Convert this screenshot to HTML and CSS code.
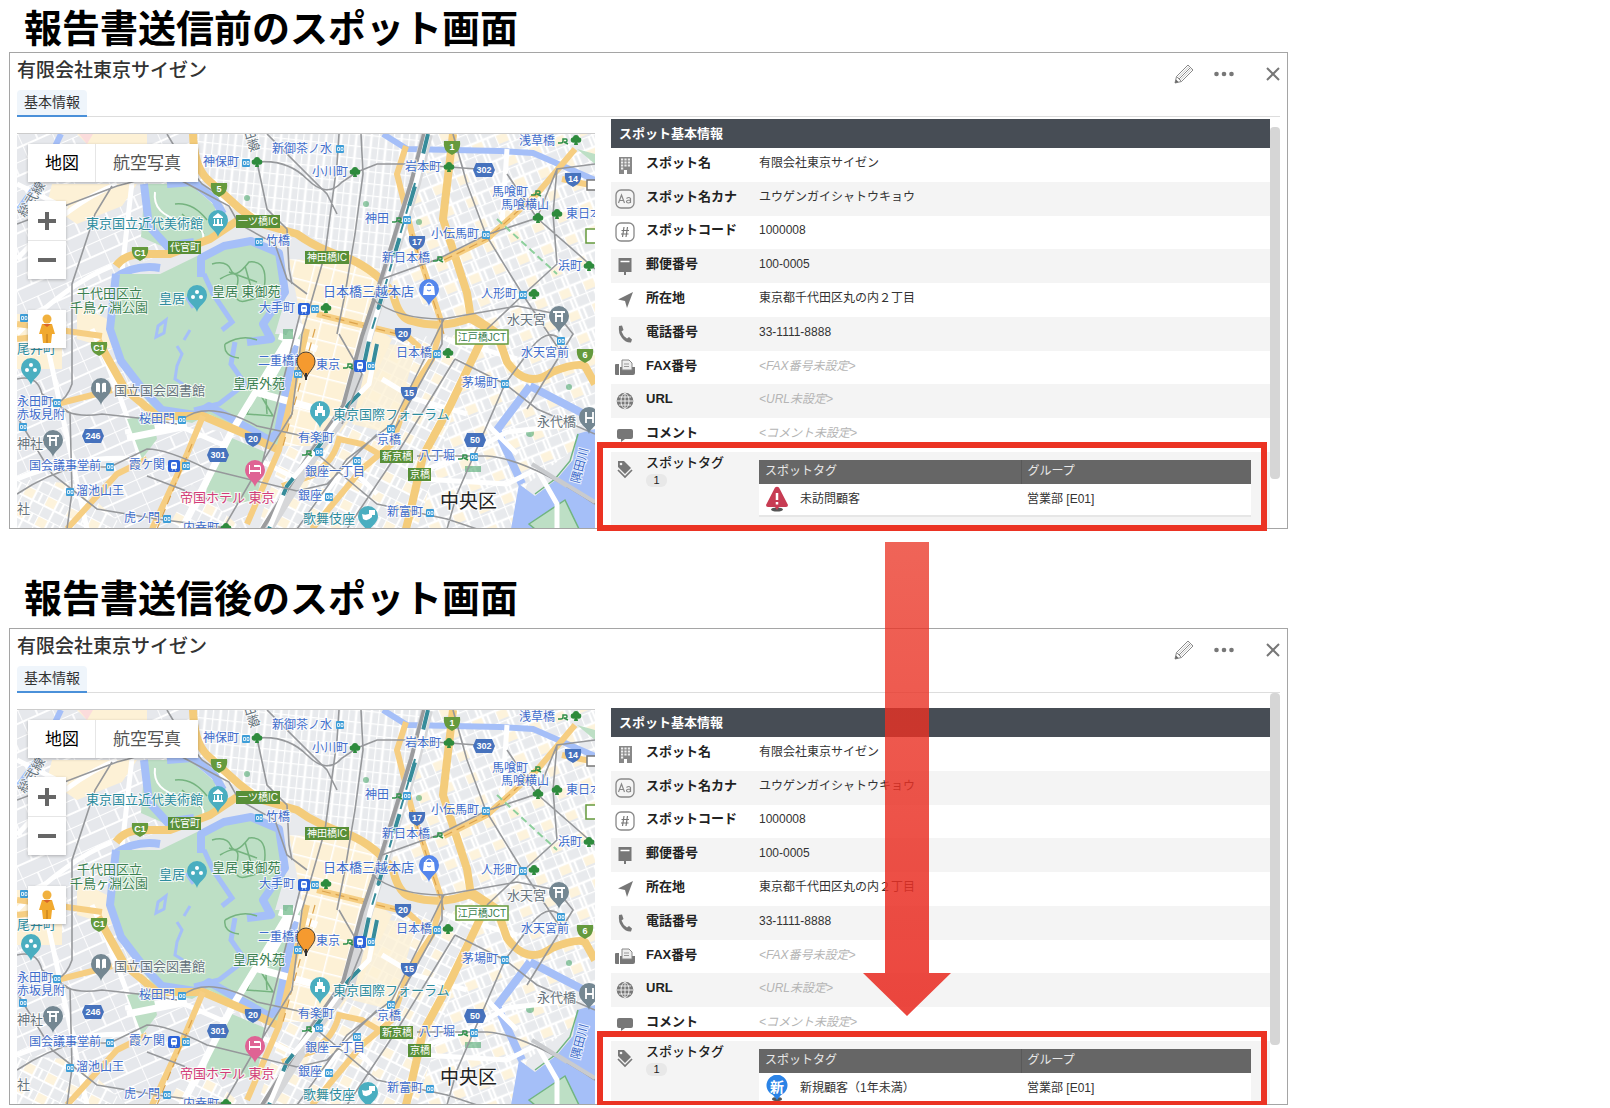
FILE: index.html
```
<!DOCTYPE html>
<html lang="ja">
<head>
<meta charset="utf-8">
<title>スポット画面</title>
<link rel="stylesheet" href="styles.css">
</head>
<body>
<svg class="sprite" aria-hidden="true">
  <defs>
    <pattern id="st-kanda" width="15" height="12" patternUnits="userSpaceOnUse" patternTransform="rotate(6)"><rect width="15" height="12" fill="#e8eaed"/><path d="M0 0H15M0 0V12M8 0V12" stroke="#fff" stroke-width="2.6"/></pattern>
    <pattern id="st-east" width="26" height="24" patternUnits="userSpaceOnUse" patternTransform="rotate(-22)"><rect width="26" height="24" fill="#e8eaed"/><rect x="1" y="13" width="11" height="9" fill="#fdf3dc"/><path d="M0 0H26M0 12H26M0 0V24M9 0V12M18 12V24M13 0V24" stroke="#fff" stroke-width="2.4"/></pattern>
    <pattern id="st-ginza" width="24" height="22" patternUnits="userSpaceOnUse" patternTransform="rotate(27)"><rect width="24" height="22" fill="#e8eaed"/><rect x="1" y="1" width="11" height="9" fill="#fdf3dc"/><path d="M0 0H24M0 11H24M0 0V22M12 0V22M18 0V11" stroke="#fff" stroke-width="2.2"/></pattern>
    <pattern id="st-maru" width="20" height="18" patternUnits="userSpaceOnUse" patternTransform="rotate(14)"><rect width="20" height="18" fill="#fdf1d6"/><path d="M0 0H20M0 0V18" stroke="#fff" stroke-width="3"/></pattern>
    <pattern id="st-west" width="32" height="26" patternUnits="userSpaceOnUse" patternTransform="rotate(-24)"><rect width="32" height="26" fill="#e6e8ec"/><path d="M0 0H32M0 0V26M17 0V13M0 13H32" stroke="#fff" stroke-width="1.8"/></pattern>

    <g id="metro"><rect x="-4" y="-4" width="8" height="8" rx="1" fill="#3e9ed8"/><path d="M-2.500 -1.500H-.5V1.500H-2.500ZM1 -1.500H3V1.500H1Z" fill="none" stroke="#fff" stroke-width=".8"/></g>
    <g id="jr" fill="none" stroke="#2f8f4a" stroke-width="1.5"><path d="M-5 2H-2Q0 2 0 0V-2H3Q4 -2 4 -.5T3 1H1L5 3"/></g>
    <g id="clover" fill="#2e8b3d"><circle cx="-2.500" cy="0" r="2.800"/><circle cx="2.500" cy="0" r="2.800"/><circle cy="-2" r="3"/><path d="M-1 0H1L2 5H-2Z"/></g>
    <g id="train"><rect x="-6" y="-6" width="12" height="12" rx="2" fill="#2b62d9"/><rect x="-3" y="-4" width="6" height="7" rx="1.500" fill="#fff"/><path d="M-2 -2H2V0H-2ZM-2 5L-1 3M2 5L1 3" fill="#2b62d9" stroke="#fff" stroke-width=".6"/></g>
    <path id="pin" d="M0 17C-1 11 -10 8 -10 0A10 10 0 0 1 10 0C10 8 1 11 0 17Z"/>
    <path id="shield" d="M-8 -6H8Q9 1 5 5L0 8L-5 5Q-9 1 -8 -6Z"/>
    <path id="badge" d="M-8 -7H8L11 0L8 7H-8L-11 0Z"/>

    <symbol id="map-base" viewBox="0 0 578 395">
      <rect width="578" height="395" fill="#e8eaed"/>
      <path d="M0 0H230L200 100L120 130L90 200L140 282L260 312L230 395H0Z" fill="url(#st-west)"/>
      <path d="M35 50L120 50L105 72L60 90L30 70ZM0 180H45V235H0ZM60 170L90 185L95 215L60 205ZM60 0H130V10H70Z" fill="#fdf1d6"/>
      <path d="M0 345L60 350L110 395H0ZM150 395L175 350L225 395Z" fill="url(#st-ginza)"/>
      <path d="M180 0H420L370 140L340 130L290 100L235 85L185 45Z" fill="url(#st-kanda)"/>
      <path d="M408 0H578V300L510 350L500 395H390L450 200L375 150Z" fill="url(#st-east)"/>
      <path d="M352 205L460 200L400 395H240L265 320Z" fill="url(#st-ginza)"/>
      <path d="M272 125L330 128L365 145L335 270L300 312L262 312L285 190Z" fill="url(#st-maru)"/>
      <path d="M355 190L375 205L345 270L322 300L340 240Z" fill="#fdf1d6"/>
      <path d="M368 210L400 212L375 300L335 290Z" fill="#fdf1d6" opacity=".8"/>
      <path d="M62 0H76L70 10Z" fill="#fbdcdc"/>
      <path d="M0 125Q50 70 100 50M0 200Q50 150 95 132M30 210L70 395M75 195Q105 260 125 330M0 50L50 75M115 48L98 200M108 298L158 290L250 330L280 345M168 50L245 85M0 345Q60 320 125 325" fill="none" stroke="#fff" stroke-width="5"/>

      <path d="M128 50H173L198 72L200 100L158 118L124 103Z" fill="#bddfc5"/>
      <path d="M127 50L132 92L150 112L177 108M150 50L176 48L198 66L206 80M98 144Q118 130 143 134" fill="none" stroke="#a5bff8" stroke-width="8"/>
      <path d="M98 140L143 140L180 122L210 110L234 105L263 115L270 159L258 200L284 200L272 250L262 312L225 296L192 280L175 289L143 282L126 262L103 229L90 195Z" fill="#bddfc5"/>
      <path d="M99 140L93 195L104 227L127 257L145 276L178 281L192 272L252 306L261 298L279 205M184 143V124L207 112L234 107L262 119L268 158L246 190L254 205L230 208" fill="none" stroke="#a5bff8" stroke-width="8" stroke-linejoin="round"/>
      <path d="M187 140L196 160L215 188L205 196M218 208L214 230L228 250L202 270L177 276" fill="none" stroke="#a5bff8" stroke-width="5"/>
      <path d="M141 192L149 186L147 199L139 203ZM160 212L165 220L160 232L158 245L166 250M173 196L167 206M169 163L176 174" fill="none" stroke="#a5bff8" stroke-width="3"/>
      <path d="M195 130Q210 126 214 136T232 128Q248 126 248 145T232 166Q215 172 220 152T203 145M212 138L240 148M228 132L236 160M208 210Q225 200 240 206M208 210Q206 222 222 224M240 255L256 282L230 280ZM248 250L250 280M158 70Q176 68 190 86M165 80L187 100" fill="none" stroke="#75b37f" stroke-width="1.500"/>
      <path d="M138 58Q135 80 165 87T183 112" fill="none" stroke="#fff" stroke-width="2"/>
      <path d="M210 302L248 318L240 365L220 370L188 360ZM110 285L135 280L140 305L125 325ZM560 15L578 20V30Z" fill="#bddfc5"/>
      <path d="M275 198L215 297L165 395M285 190L245 260L300 275M262 202L300 215M170 292L110 304" fill="none" stroke="#fff" stroke-width="7"/>
      <g fill="#2f9a55" opacity=".5"><circle cx="230" cy="64" r="3"/><circle cx="402" cy="88" r="3"/><circle cx="513" cy="299" r="4"/><circle cx="552" cy="253" r="3"/><circle cx="349" cy="70" r="3"/><rect x="448" y="332" width="16" height="6"/><rect x="266" y="195" width="10" height="10"/></g>

      <path d="M366 0L390 15L483 17L516 19L578 46M0 78L20 50L44 0" fill="none" stroke="#a5bff8" stroke-width="6"/>
      <path d="M513 252L480 296L505 350M513 252L565 279" fill="none" stroke="#a5bff8" stroke-width="8"/>
      <path d="M560 300L578 295V395H494L502 350L518 362L540 345L556 326Z" fill="#a5bff8"/>
      <path d="M512 390L548 366L562 395H518Z" fill="#bddfc5" stroke="#71b580" stroke-width="1.500"/>
      <path d="M561 300L553 327L538 345L518 360" fill="none" stroke="#71b580" stroke-width="1.500"/>
      <path d="M405 345L490 350L520 335L540 370L540 395M410 335L450 320L490 298L560 290M365 245L398 265L450 280M470 290L500 320M300 370L330 330L360 360M430 205L500 225M490 15L485 90" fill="none" stroke="#fff" stroke-width="5"/>

      <g fill="none" stroke="#f4cc7b" stroke-width="8" stroke-linejoin="round">
        <path d="M99 132Q108 120 125 120L153 120L193 105L220 87L245 90L280 100Q300 115 333 125Q360 137 376 160Q382 185 395 187Q425 196 456 183L480 199L490 228Q510 256 535 238Q560 228 568 232L578 250"/>
        <path d="M176 0Q177 32 190 45L222 74L243 90"/>
        <path d="M436 0L426 85L450 159L454 185L480 200M463 209L433 272L406 322L393 379L389 395"/>
        <path d="M81 207L108 255L140 282L186 282L226 299L262 316"/>
      </g>
      <g fill="none" stroke="#f6ce82" stroke-width="6">
        <path d="M186 282L170 320L135 395M0 190L85 202M0 205L40 200M40 270L95 256M50 395L100 340L130 325M290 195L262 316L230 390M389 12L380 40L395 100L410 145L425 190L415 225L392 260L375 310L345 335L295 395M300 180L390 202L410 220M427 126L470 105L520 60L558 15M283 345Q315 335 322 305L345 310L362 320M545 45L578 52M265 352L300 340"/>
      </g>
      <path d="M305 181L388 202M395 100L427 200M427 126L470 105L520 60M175 310L140 395M298 195L266 312" fill="none" stroke="#dca34c" stroke-width="1.200" stroke-dasharray="9 5"/>

      <path d="M410 0L398 49L370 139L350 202L333 272L300 315L250 395" fill="none" stroke="#d6d7d9" stroke-width="12"/>
      <path d="M407 0L394 49L366 139L345 202L326 272L296 315L245 395" fill="none" stroke="#9b9c9e" stroke-width="4"/>
      <path d="M411 0L399 49L372 139L353 202L345 240M360 210L352 250L332 270L302 312L270 352L252 395" fill="none" stroke="#fff" stroke-width="5"/>
      <path d="M411 0L399 49L372 139L353 202L345 240M360 210L352 250L332 270L302 312L270 352L252 395" fill="none" stroke="#378c9a" stroke-width="4" stroke-dasharray="20 34"/>
      <path d="M398 49L372 139L353 202" fill="none" stroke="#378c9a" stroke-width="2" stroke-dasharray="12 8"/>
      <g fill="none" stroke="#96989b" stroke-width="1.600">
        <path d="M0 90L100 52L138 42M95 52L78 80L55 150V190L55 250Q50 265 40 269M150 0L165 25L185 50L200 60M165 47L212 72L222 90L258 110L270 145L290 160M240 28L250 75L270 95L272 135L275 150M240 28Q270 25 290 45T325 48L340 38L360 30H388L432 33L460 35"/>
        <path d="M322 0L320 30L308 120L285 200L275 280L235 345L206 395M344 0L346 40L338 100L328 160L320 200M0 245Q20 240 25 260L53 279L55 358L50 395M40 269Q50 285 85 280L130 285L160 290M165 286Q190 265 240 292L300 305M0 360Q30 340 60 333H93L130 315Q150 315 190 335L280 357L310 350L360 300M0 283L35 340L80 375L140 385L210 394M130 342L190 365M436 0L450 50L469 101L506 161L545 220M421 125L469 101L520 84L540 35L578 30M540 35L536 80L540 130L506 161L470 195M365 145L421 125M355 165Q380 185 426 185L500 172L540 180L556 200L510 275M427 185L400 240L375 290L330 325L280 395M438 225L380 320L330 395M438 225L488 250L520 275L578 300M400 322H470Q510 325 578 370M425 185V210L375 300M545 207Q530 190 510 220L488 250L440 360L430 395M250 0L310 60L320 80M283 180L245 330M300 320L360 370L430 385L460 395M322 200L345 240L325 290M490 40L520 84L578 135"/>
      </g>
      <path d="M480 85L540 140" stroke="#8dcf9c" stroke-width="2" stroke-dasharray="7 4"/>
      <path d="M540 345L578 368M515 330L550 352" stroke="#c9cbce" stroke-width="4"/>

      <g fill="#659a3d"><use href="#shield" x="202" y="55"/><use href="#shield" x="123" y="119"/><use href="#shield" x="82" y="214"/><use href="#shield" x="435" y="13"/><use href="#shield" x="568" y="221"/></g>
      <g fill="#4672bd"><use href="#shield" x="400" y="108"/><use href="#shield" x="556" y="45"/><use href="#shield" x="386" y="200"/><use href="#shield" x="392" y="259"/><use href="#shield" x="236" y="305"/><use href="#badge" x="467" y="36"/><use href="#badge" x="76" y="302"/><use href="#badge" x="201" y="321"/><use href="#badge" x="458" y="306"/></g>
      <g fill="#588f38"><rect x="219" y="81" width="44" height="13"/><rect x="151" y="107" width="33" height="13"/><rect x="288" y="117" width="44" height="13"/><rect x="363" y="316" width="33" height="13"/><rect x="391" y="334" width="23" height="13"/></g>
      <g fill="#fff" stroke="#659a3d" stroke-width="1.500"><rect x="439" y="196" width="52" height="14"/><rect x="569" y="95" width="14" height="14"/><rect x="570" y="46" width="12" height="10" stroke="#777"/></g>

      <g fill="#4aaec0"><use href="#pin" x="201" y="86"/><use href="#pin" x="180" y="161"/><use href="#pin" x="14" y="234"/><use href="#pin" x="303" y="277"/><use href="#pin" x="351" y="382"/></g>
      <g fill="#748792"><use href="#pin" x="542" y="182"/><use href="#pin" x="572" y="283"/><use href="#pin" x="84" y="254"/><use href="#pin" x="36" y="306"/></g>
      <use href="#pin" x="412" y="155" fill="#5486ec"/><use href="#pin" x="238" y="336" fill="#df6394"/>
      <g fill="#fff">
        <path d="M196 83L201 79L206 83V84H196ZM197 85H198V90H197ZM200 85H202V90H200ZM204 85H205V90H204ZM196 90H206V92H196Z"/>
        <circle cx="180" cy="158" r="2"/><circle cx="176" cy="163" r="2"/><circle cx="184" cy="163" r="2"/><circle cx="14" cy="231" r="2"/><circle cx="10" cy="236" r="2"/><circle cx="18" cy="236" r="2"/>
        <path d="M298 276H308V282H305V279H301V282H298ZM300 272H306V276H300ZM302 269H303V272H302Z"/>
        <path d="M79 249Q82 248 83 250V259Q82 257 79 258ZM89 249Q86 248 85 250V259Q86 257 89 258Z"/>
        <path d="M232 331H233V336H243V333H237V331H242Q244 331 244 334V340H243V338H233V340H232Z"/>
        <path d="M407 152H417L418 161H406Z"/><path d="M345 380Q350 382 355 378V383Q350 388 346 385ZM352 376H358V381H352Z"/>
      </g>
      <path d="M409 154V151Q412 147 415 151V154" fill="none" stroke="#fff" stroke-width="1.200"/><path d="M410 156Q412 158 414 156" fill="none" stroke="#5486ec"/>
      <path d="M536 178H548M538 182H546M539 178V188M545 178V188M30 302H42M32 306H40M33 302V312M39 302V312M569 278V289M576 278V289M569 284H576" fill="none" stroke="#fff" stroke-width="1.800"/>

      <use href="#metro" x="323" y="15"/><use href="#metro" x="229" y="29"/><use href="#metro" x="242" y="108"/><use href="#metro" x="298" y="175"/><use href="#metro" x="390" y="86"/><use href="#metro" x="469" y="101"/><use href="#metro" x="506" y="161"/><use href="#metro" x="420" y="220"/><use href="#metro" x="544" y="207"/><use href="#metro" x="354" y="232"/><use href="#metro" x="488" y="250"/><use href="#metro" x="374" y="295"/><use href="#metro" x="457" y="323"/><use href="#metro" x="302" y="318"/><use href="#metro" x="340" y="327"/><use href="#metro" x="312" y="363"/><use href="#metro" x="413" y="379"/><use href="#metro" x="40" y="269"/><use href="#metro" x="6" y="293"/><use href="#metro" x="165" y="286"/><use href="#metro" x="93" y="333"/><use href="#metro" x="169" y="332"/><use href="#metro" x="53" y="358"/><use href="#metro" x="150" y="385"/><use href="#metro" x="281" y="240"/><use href="#metro" x="7" y="184"/>
      <use href="#clover" x="240" y="28"/><use href="#clover" x="309" y="174"/><use href="#clover" x="338" y="38"/><use href="#clover" x="432" y="33"/><use href="#clover" x="559" y="6"/><use href="#clover" x="521" y="84"/><use href="#clover" x="540" y="80"/><use href="#clover" x="572" y="132"/><use href="#clover" x="517" y="160"/><use href="#clover" x="431" y="219"/><use href="#clover" x="209" y="394"/>
      <use href="#jr" x="546" y="7"/><use href="#jr" x="519" y="59"/><use href="#jr" x="380" y="86"/><use href="#jr" x="421" y="125"/><use href="#jr" x="331" y="232"/><use href="#jr" x="446" y="323"/><use href="#jr" x="290" y="319"/>
      <use href="#train" x="287" y="175"/><use href="#train" x="343" y="232"/><use href="#train" x="157" y="332"/>
    </symbol>
    <symbol id="marker" viewBox="0 0 20 30"><path d="M10 29C9 21 1 18 1 10A9 9 0 0 1 19 10C19 18 11 21 10 29Z" fill="#f59a2f" stroke="#4a4033" stroke-width="1"/><path d="M10 22V29" stroke="#333" stroke-width="2"/></symbol>

    <symbol id="i-pencil" viewBox="0 0 20 20"><path d="M1 19L2.500 12.500L14 1L19 6L7.500 17.500ZM2.500 12.500L7.500 17.500M5 15L16.500 3.500" fill="none" stroke="#888" stroke-width="1"/><path d="M3.800 13.800L15.300 2.300M6.200 16.200L17.700 4.700" fill="none" stroke="#aaa" stroke-width=".7"/><path d="M1 19L2 15.500L4.500 18Z" fill="#666"/></symbol>
    <symbol id="i-dots" viewBox="0 0 20 6"><g fill="#777"><circle cx="2.500" cy="3" r="2.300"/><circle cx="10" cy="3" r="2.300"/><circle cx="17.500" cy="3" r="2.300"/></g></symbol>
    <symbol id="i-close" viewBox="0 0 14 14"><path d="M1 1L13 13M13 1L1 13" stroke="#777" stroke-width="2"/></symbol>
    <symbol id="i-building" viewBox="0 0 20 20"><path d="M4 2H17V19H12V15H9V19H4Z" fill="#888"/><path d="M6 4.500H15M6 7.500H15M6 10.500H15M6 13.500H9" stroke="#eee" stroke-width="1.800" stroke-dasharray="2.200 1.200"/></symbol>
    <symbol id="i-kana" viewBox="0 0 20 20"><rect x="1" y="1" width="18" height="18" rx="5" fill="none" stroke="#888" stroke-width="1.300"/><path d="M3.500 14L6.500 6L9.500 14M4.500 11.500H8.500M11.500 9.500Q14 7.500 15.500 9.500V14M15.500 11Q11.500 11 11.500 12.500T13.500 14T15.500 12.500" fill="none" stroke="#888" stroke-width="1.200"/></symbol>
    <symbol id="i-hash" viewBox="0 0 20 20"><rect x="1" y="1" width="18" height="18" rx="5" fill="none" stroke="#888" stroke-width="1.300"/><path d="M9 5L7.500 15M12.500 5L11 15M6.500 8.500H14M6 12H13.500" stroke="#777" stroke-width="1.200"/></symbol>
    <symbol id="i-post" viewBox="0 0 20 20"><path d="M3.500 2H16.500V16H11V19H9V16H3.500Z" fill="#777"/><path d="M5.500 5.500H14.500" stroke="#fff" stroke-width="1.500"/></symbol>
    <symbol id="i-place" viewBox="0 0 20 20"><path d="M18 2L12 18L10 11L3 9.500Z" fill="#777"/></symbol>
    <symbol id="i-phone" viewBox="0 0 20 20"><path d="M4 2L7 1.500L8.500 6L6.500 7.500Q8 12 12 14.500L14 13L17 15.500L16 18.500Q11 19 7 14T4 2Z" fill="#777"/></symbol>
    <symbol id="i-fax" viewBox="0 0 20 20"><path d="M0 7Q0 6 1 6H4V17H1Q0 17 0 16ZM5 9H20V15Q20 17 18 17H5Z" fill="#777"/><path d="M7 12V2H14L17 5V12Z" fill="#eee" stroke="#888"/><path d="M9 6H14M9 8.500H14" stroke="#999"/></symbol>
    <symbol id="i-globe" viewBox="0 0 20 20"><circle cx="10" cy="10" r="8.300" fill="#777"/><g fill="none" stroke="#eee" stroke-width="1"><ellipse cx="10" cy="10" rx="4" ry="7.500"/><path d="M2 10H18M10 2V18M4 6H16M4 14H16"/></g></symbol>
    <symbol id="i-comment" viewBox="0 0 20 20"><path d="M4 4H16Q18 4 18 6V12Q18 14 16 14H10L6 17V14H4Q2 14 2 12V6Q2 4 4 4Z" fill="#777"/></symbol>
    <symbol id="i-tag" viewBox="0 0 20 20"><path d="M3 2L9 2L16 9L10 15L3 8Z" fill="#777"/><circle cx="6" cy="5" r="1.300" fill="#f4f4f4"/><path d="M3 11L10 18L17 11" fill="none" stroke="#777" stroke-width="1.700"/></symbol>
    <symbol id="i-pegman" viewBox="0 0 18 30"><circle cx="9" cy="5" r="4.500" fill="#f1b13e"/><path d="M4 10H14L17 20H14L13 29H5L4 20H1Z" fill="#f1a92e"/><path d="M5 10L9 13L13 10Z" fill="#d8642a"/><path d="M9 20V29" stroke="#b9751a"/></symbol>
    <symbol id="i-warn" viewBox="0 0 24 26"><ellipse cx="12" cy="23.500" rx="6" ry="2" fill="#555"/><path d="M10 1.500Q12 0 14 1.500L23 19Q23 21 21 21H14L12 24L10 21H3Q1 21 1 19Z" fill="#c73c53"/><path d="M12 7V14M12 16V18.500" stroke="#fff" stroke-width="2.500"/></symbol>
    <symbol id="i-new" viewBox="0 0 24 26"><ellipse cx="12" cy="24" rx="5" ry="2" fill="#555"/><path d="M12 25L8 20A10.500 10.500 0 1 1 16 20Z" fill="#2b83e6"/></symbol>
  </defs>
</svg>

<main class="page">
  <section class="shot">
    <h2 class="shot-title">報告書送信前のスポット画面</h2>
    <article class="panel">
      <header class="panel-head">
        <h3 class="panel-title">有限会社東京サイゼン</h3>
        <div class="tools">
          <button class="tool" type="button" aria-label="編集"><svg width="20" height="20"><use href="#i-pencil"/></svg></button>
          <button class="tool" type="button" aria-label="メニュー"><svg width="20" height="6"><use href="#i-dots"/></svg></button>
          <button class="tool close" type="button" aria-label="閉じる"><svg width="14" height="14"><use href="#i-close"/></svg></button>
        </div>
      </header>
      <nav class="tabs"><a class="tab" href="#info-before">基本情報</a></nav>
      <div class="panel-body">
        <div class="map">
          <svg class="map-art" viewBox="0 0 578 395" preserveAspectRatio="xMinYMin slice">
            <use href="#map-base" width="578" height="395"/>
            <g class="st"><text x="255" y="19">新御茶ノ水</text><text x="186" y="32">神保町</text><text x="249" y="111">竹橋</text><text x="242" y="178">大手町</text><text x="295" y="42">小川町</text><text x="388" y="37">岩本町</text><text x="502" y="11">浅草橋</text><text x="475" y="62">馬喰町</text><text x="484" y="75">馬喰横山</text><text x="549" y="84">東日本</text><text x="348" y="89">神田</text><text x="414" y="104">小伝馬町</text><text x="365" y="128">新日本橋</text><text x="541" y="136">浜町</text><text x="464" y="164">人形町</text><text x="379" y="223">日本橋</text><text x="504" y="223">水天宮前</text><text x="299" y="235">東京</text><text x="445" y="253">茅場町</text><text x="360" y="310">京橋</text><text x="402" y="326">八丁堀</text><text x="281" y="308">有楽町</text><text x="288" y="342">銀座一丁目</text><text x="281" y="366">銀座</text><text x="370" y="382">新富町</text><text x="0" y="272">永田町</text><text x="0" y="285">赤坂見附</text><text x="122" y="289">桜田門</text><text x="12" y="336">国会議事堂前</text><text x="112" y="335">霞ケ関</text><text x="59" y="361">溜池山王</text><text x="107" y="388">虎ノ門</text><text x="166" y="398">内幸町</text><text x="241" y="231">二重橋前</text><text transform="translate(562 350) rotate(-75)">隅田川</text></g>
            <g class="poi"><text class="c-teal" x="69" y="94">東京国立近代美術館</text><text class="c-teal" x="142" y="169">皇居</text><text class="c-teal" x="316" y="285">東京国際フォーラム</text><text class="c-teal" x="286" y="389">歌舞伎座</text><text class="c-teal" x="0" y="219">尾井町</text><text class="c-green" x="195" y="162">皇居 東御苑</text><text class="c-green" x="60" y="164">千代田区立</text><text class="c-green" x="53" y="178">千鳥ヶ淵公園</text><text class="c-green" x="216" y="254">皇居外苑</text><text class="c-blue" x="306" y="162">日本橋三越本店</text><text class="c-gray" x="490" y="190">水天宮</text><text class="c-gray" x="520" y="292">永代橋</text><text class="c-gray" x="97" y="261">国立国会図書館</text><text class="c-gray" x="0" y="314">神社</text><text class="c-gray" x="0" y="379">社</text><text class="c-gray" transform="translate(8 84) rotate(-58)">総武線</text><text class="c-gray" transform="translate(226 -6) rotate(72)">田線</text><text class="c-pink" x="163" y="368">帝国ホテル 東京</text><text class="ward" x="423" y="374">中央区</text></g>
            <g class="sign"><text x="202" y="58">5</text><text x="123" y="122">C1</text><text x="82" y="217">C1</text><text x="435" y="16">1</text><text x="568" y="224">6</text><text x="400" y="111">17</text><text x="556" y="48">14</text><text x="386" y="203">20</text><text x="392" y="262">15</text><text x="236" y="308">20</text><text x="467" y="39">302</text><text x="76" y="305">246</text><text x="201" y="324">301</text><text x="458" y="309">50</text></g>
            <g class="plate"><text x="241" y="91">一ツ橋IC</text><text x="168" y="117">代官町</text><text x="310" y="127">神田橋IC</text><text x="380" y="326">新京橋</text><text x="403" y="344">京橋</text><text class="c-green" x="465" y="207">江戸橋JCT</text></g>
            <use href="#marker" x="279" y="217" width="20" height="30"/>
          </svg>
          <div class="map-type"><button type="button" class="on">地図</button><button type="button">航空写真</button></div>
          <div class="map-zoom"><button type="button" aria-label="拡大"><svg width="18" height="18"><path d="M0 9H18M9 0V18" stroke="#666" stroke-width="4"/></svg></button><button type="button" aria-label="縮小"><svg width="18" height="18"><path d="M0 9H18" stroke="#666" stroke-width="4"/></svg></button></div>
          <button type="button" class="pegman" aria-label="ストリートビュー"><svg width="18" height="30"><use href="#i-pegman"/></svg></button>
        </div>
        <div class="details" id="info-before">
          <div class="scroll">
            <h4 class="info-head">スポット基本情報</h4>
            <dl class="info">
              <div class="row"><svg class="ico"><use href="#i-building"/></svg><dt>スポット名</dt><dd>有限会社東京サイゼン</dd></div>
              <div class="row"><svg class="ico"><use href="#i-kana"/></svg><dt>スポット名カナ</dt><dd>ユウゲンガイシャトウキョウ</dd></div>
              <div class="row"><svg class="ico"><use href="#i-hash"/></svg><dt>スポットコード</dt><dd>1000008</dd></div>
              <div class="row"><svg class="ico"><use href="#i-post"/></svg><dt>郵便番号</dt><dd>100-0005</dd></div>
              <div class="row"><svg class="ico"><use href="#i-place"/></svg><dt>所在地</dt><dd>東京都千代田区丸の内２丁目</dd></div>
              <div class="row"><svg class="ico"><use href="#i-phone"/></svg><dt>電話番号</dt><dd>33-1111-8888</dd></div>
              <div class="row"><svg class="ico"><use href="#i-fax"/></svg><dt>FAX番号</dt><dd class="unset">&lt;FAX番号未設定&gt;</dd></div>
              <div class="row"><svg class="ico"><use href="#i-globe"/></svg><dt>URL</dt><dd class="unset">&lt;URL未設定&gt;</dd></div>
              <div class="row"><svg class="ico"><use href="#i-comment"/></svg><dt>コメント</dt><dd class="unset">&lt;コメント未設定&gt;</dd></div>
            </dl>
            <div class="tag-row">
              <svg class="ico"><use href="#i-tag"/></svg>
              <div class="tag-label">スポットタグ<span class="count">1</span></div>
              <table class="tags">
                <thead><tr><th class="col-tag">スポットタグ</th><th>グループ</th></tr></thead>
                <tbody><tr><td><div class="tag"><svg width="24" height="26"><use href="#i-warn"/></svg>未訪問顧客</div></td><td>営業部 [E01]</td></tr></tbody>
              </table>
            </div>
          </div>
          <div class="highlight"></div>
        </div>
        <div class="scrollbar"></div>
      </div>
    </article>
  </section>

  <section class="shot after">
    <h2 class="shot-title">報告書送信後のスポット画面</h2>
    <article class="panel">
      <header class="panel-head">
        <h3 class="panel-title">有限会社東京サイゼン</h3>
        <div class="tools">
          <button class="tool" type="button" aria-label="編集"><svg width="20" height="20"><use href="#i-pencil"/></svg></button>
          <button class="tool" type="button" aria-label="メニュー"><svg width="20" height="6"><use href="#i-dots"/></svg></button>
          <button class="tool close" type="button" aria-label="閉じる"><svg width="14" height="14"><use href="#i-close"/></svg></button>
        </div>
      </header>
      <nav class="tabs"><a class="tab" href="#info-after">基本情報</a></nav>
      <div class="panel-body">
        <div class="map">
          <svg class="map-art" viewBox="0 0 578 395" preserveAspectRatio="xMinYMin slice">
            <use href="#map-base" width="578" height="395"/>
            <g class="st"><text x="255" y="19">新御茶ノ水</text><text x="186" y="32">神保町</text><text x="249" y="111">竹橋</text><text x="242" y="178">大手町</text><text x="295" y="42">小川町</text><text x="388" y="37">岩本町</text><text x="502" y="11">浅草橋</text><text x="475" y="62">馬喰町</text><text x="484" y="75">馬喰横山</text><text x="549" y="84">東日本</text><text x="348" y="89">神田</text><text x="414" y="104">小伝馬町</text><text x="365" y="128">新日本橋</text><text x="541" y="136">浜町</text><text x="464" y="164">人形町</text><text x="379" y="223">日本橋</text><text x="504" y="223">水天宮前</text><text x="299" y="235">東京</text><text x="445" y="253">茅場町</text><text x="360" y="310">京橋</text><text x="402" y="326">八丁堀</text><text x="281" y="308">有楽町</text><text x="288" y="342">銀座一丁目</text><text x="281" y="366">銀座</text><text x="370" y="382">新富町</text><text x="0" y="272">永田町</text><text x="0" y="285">赤坂見附</text><text x="122" y="289">桜田門</text><text x="12" y="336">国会議事堂前</text><text x="112" y="335">霞ケ関</text><text x="59" y="361">溜池山王</text><text x="107" y="388">虎ノ門</text><text x="166" y="398">内幸町</text><text x="241" y="231">二重橋前</text><text transform="translate(562 350) rotate(-75)">隅田川</text></g>
            <g class="poi"><text class="c-teal" x="69" y="94">東京国立近代美術館</text><text class="c-teal" x="142" y="169">皇居</text><text class="c-teal" x="316" y="285">東京国際フォーラム</text><text class="c-teal" x="286" y="389">歌舞伎座</text><text class="c-teal" x="0" y="219">尾井町</text><text class="c-green" x="195" y="162">皇居 東御苑</text><text class="c-green" x="60" y="164">千代田区立</text><text class="c-green" x="53" y="178">千鳥ヶ淵公園</text><text class="c-green" x="216" y="254">皇居外苑</text><text class="c-blue" x="306" y="162">日本橋三越本店</text><text class="c-gray" x="490" y="190">水天宮</text><text class="c-gray" x="520" y="292">永代橋</text><text class="c-gray" x="97" y="261">国立国会図書館</text><text class="c-gray" x="0" y="314">神社</text><text class="c-gray" x="0" y="379">社</text><text class="c-gray" transform="translate(8 84) rotate(-58)">総武線</text><text class="c-gray" transform="translate(226 -6) rotate(72)">田線</text><text class="c-pink" x="163" y="368">帝国ホテル 東京</text><text class="ward" x="423" y="374">中央区</text></g>
            <g class="sign"><text x="202" y="58">5</text><text x="123" y="122">C1</text><text x="82" y="217">C1</text><text x="435" y="16">1</text><text x="568" y="224">6</text><text x="400" y="111">17</text><text x="556" y="48">14</text><text x="386" y="203">20</text><text x="392" y="262">15</text><text x="236" y="308">20</text><text x="467" y="39">302</text><text x="76" y="305">246</text><text x="201" y="324">301</text><text x="458" y="309">50</text></g>
            <g class="plate"><text x="241" y="91">一ツ橋IC</text><text x="168" y="117">代官町</text><text x="310" y="127">神田橋IC</text><text x="380" y="326">新京橋</text><text x="403" y="344">京橋</text><text class="c-green" x="465" y="207">江戸橋JCT</text></g>
            <use href="#marker" x="279" y="217" width="20" height="30"/>
          </svg>
          <div class="map-type"><button type="button" class="on">地図</button><button type="button">航空写真</button></div>
          <div class="map-zoom"><button type="button" aria-label="拡大"><svg width="18" height="18"><path d="M0 9H18M9 0V18" stroke="#666" stroke-width="4"/></svg></button><button type="button" aria-label="縮小"><svg width="18" height="18"><path d="M0 9H18" stroke="#666" stroke-width="4"/></svg></button></div>
          <button type="button" class="pegman" aria-label="ストリートビュー"><svg width="18" height="30"><use href="#i-pegman"/></svg></button>
        </div>
        <div class="details" id="info-after">
          <div class="scroll">
            <h4 class="info-head">スポット基本情報</h4>
            <dl class="info">
              <div class="row"><svg class="ico"><use href="#i-building"/></svg><dt>スポット名</dt><dd>有限会社東京サイゼン</dd></div>
              <div class="row"><svg class="ico"><use href="#i-kana"/></svg><dt>スポット名カナ</dt><dd>ユウゲンガイシャトウキョウ</dd></div>
              <div class="row"><svg class="ico"><use href="#i-hash"/></svg><dt>スポットコード</dt><dd>1000008</dd></div>
              <div class="row"><svg class="ico"><use href="#i-post"/></svg><dt>郵便番号</dt><dd>100-0005</dd></div>
              <div class="row"><svg class="ico"><use href="#i-place"/></svg><dt>所在地</dt><dd>東京都千代田区丸の内２丁目</dd></div>
              <div class="row"><svg class="ico"><use href="#i-phone"/></svg><dt>電話番号</dt><dd>33-1111-8888</dd></div>
              <div class="row"><svg class="ico"><use href="#i-fax"/></svg><dt>FAX番号</dt><dd class="unset">&lt;FAX番号未設定&gt;</dd></div>
              <div class="row"><svg class="ico"><use href="#i-globe"/></svg><dt>URL</dt><dd class="unset">&lt;URL未設定&gt;</dd></div>
              <div class="row"><svg class="ico"><use href="#i-comment"/></svg><dt>コメント</dt><dd class="unset">&lt;コメント未設定&gt;</dd></div>
            </dl>
            <div class="tag-row">
              <svg class="ico"><use href="#i-tag"/></svg>
              <div class="tag-label">スポットタグ<span class="count">1</span></div>
              <table class="tags">
                <thead><tr><th class="col-tag">スポットタグ</th><th>グループ</th></tr></thead>
                <tbody><tr><td><div class="tag"><svg width="24" height="26"><use href="#i-new"/><text class="new-mark" x="12" y="17">新</text></svg>新規顧客（1年未満）</div></td><td>営業部 [E01]</td></tr></tbody>
              </table>
            </div>
          </div>
          <div class="highlight"></div>
        </div>
        <div class="scrollbar"></div>
      </div>
    </article>
  </section>

  <svg class="arrow" viewBox="0 0 88 474" aria-hidden="true">
    <defs><linearGradient id="arrow-fill" x1="0" y1="0" x2="0" y2="1"><stop offset="0" stop-color="#ea3323" stop-opacity=".76"/><stop offset="1" stop-color="#e92d24" stop-opacity=".88"/></linearGradient></defs>
    <path d="M22 0H66V431H88L44 474L0 431H22Z" fill="url(#arrow-fill)"/>
  </svg>
</main>
</body>
</html>
```
FILE: styles.css
```
* { box-sizing: border-box; }
body {
  margin: 0;
  background: #fff;
  color: #333;
  font-family: "Liberation Sans", "Noto Sans CJK JP", sans-serif;
}
h2, h3, h4, dl, dd { margin: 0; }
button { border: 0; padding: 0; background: none; font-family: inherit; color: inherit; }
button svg { display: block; }
.sprite { position: absolute; width: 0; height: 0; }

.page { position: relative; max-width: 1279px; margin: 0 9px; }
.shot-title {
  padding: 6px 0 0 15px;
  font-size: 38px;
  line-height: 46px;
  font-weight: 700;
  color: #000;
}
.after .shot-title { padding: 47px 0 6px 15px; }

.panel { border: 1px solid #a5a5a5; padding: 0 7px; background: #fff; }
.panel-head { display: flex; justify-content: space-between; height: 37px; }
.panel-title { font-size: 19px; line-height: 36px; font-weight: 500; }
.tools { display: flex; align-items: center; gap: 20px; padding-top: 5px; }
.tool.close { margin-left: 12px; }
.tabs { display: flex; height: 27px; border-bottom: 1px solid #ddd; }
.tab {
  height: 27px;
  padding: 0 7px;
  border-bottom: 2px solid #4a90d9;
  border-radius: 4px 4px 0 0;
  background: #eff5fb;
  color: #333;
  font-size: 14px;
  line-height: 25px;
  text-decoration: none;
}
.panel-body { display: flex; height: 411px; }

.map {
  position: relative;
  flex: 578 1 0;
  margin: 16px 16px 0 0;
  overflow: hidden;
  border-top: 1px solid #ccc;
}
.map-art { display: block; width: 100%; height: 395px; }
.map-art text { stroke: #fff; stroke-width: 2px; stroke-opacity: .8; paint-order: stroke; }
.st { font-size: 12px; fill: #3f6dcb; }
.poi { font-size: 13px; }
.map-art .c-teal { fill: #2d8c9e; }
.map-art .c-green { fill: #3a8050; }
.map-art .c-blue { fill: #3f6dcb; }
.map-art .c-gray { fill: #66737c; }
.map-art .c-pink { fill: #d23d78; }
.map-art .ward { font-size: 19px; fill: #222; }
.map-art .sign text, .map-art .plate text { stroke: none; text-anchor: middle; }
.sign { font-size: 9px; font-weight: 700; fill: #fff; }
.plate { font-size: 10px; fill: #fff; }

.map-type, .map-zoom, .pegman {
  position: absolute;
  left: 11px;
  background: #fff;
  box-shadow: 0 1px 3px rgba(0, 0, 0, .25);
}
.map-type { top: 10px; display: flex; height: 38px; }
.map-type button { padding: 0 17px 3px; font-size: 17px; color: #555; }
.map-type .on { padding-right: 16px; color: #000; border-right: 1px solid #e6e6e6; }
.map-zoom { top: 67px; width: 38px; }
.map-zoom button { display: grid; place-items: center; width: 100%; height: 39px; }
.map-zoom button + button { border-top: 1px solid #e6e6e6; }
.pegman { top: 176px; display: grid; place-items: center; width: 38px; height: 38px; }

.details { position: relative; flex: 659 1 0; padding-top: 2px; }
.after .details { padding-top: 15px; }
.scroll { height: 100%; overflow: hidden; }
.info-head {
  padding-left: 8px;
  background: #474d55;
  color: #fff;
  font-size: 13px;
  line-height: 29px;
  font-weight: 700;
}
.info { display: grid; grid-auto-rows: 1fr; height: 304px; }
.row { display: grid; grid-template-columns: 35px 113px 1fr; align-items: center; }
.row:nth-child(even) { background: #f4f4f4; }
.ico { width: 20px; height: 20px; margin-left: 4px; }
.row dt { font-size: 13px; line-height: 20px; font-weight: 700; color: #222; padding-bottom: 4px; }
.row dd { font-size: 12px; line-height: 20px; padding-bottom: 4px; }
.row .unset { color: #b5b5b5; font-style: italic; }

.tag-row {
  display: grid;
  grid-template-columns: 35px 113px 1fr;
  align-items: start;
  padding: 0 19px 20px 0;
  background: #f4f4f4;
}
.tag-row .ico { margin-top: 7px; }
.tag-label { padding-top: 1px; font-size: 13px; line-height: 20px; color: #222; font-weight: 500; }
.count {
  display: block;
  width: 21px;
  margin-top: 1px;
  border-radius: 6px;
  background: #e8e8e8;
  font-size: 11px;
  line-height: 13px;
  text-align: center;
}
.tags { width: 100%; margin-top: 8px; border-collapse: collapse; table-layout: fixed; font-size: 12px; line-height: 16px; background: #fff; }
.tags th { height: 24px; padding: 0 6px 2px; background: #666; color: #e8e8e8; font-weight: 400; text-align: left; }
.tags th + th { border-left: 1px solid #595959; }
.tags .col-tag { width: 262px; }
.tags td { height: 32px; padding: 0 6px 2px; border-bottom: 2px solid #e6e6e6; }
.tag { display: flex; align-items: center; gap: 11px; }
.new-mark { font-size: 14px; font-weight: 700; fill: #fff; text-anchor: middle; }

.scrollbar { width: 10px; height: 352px; margin-top: 10px; border-radius: 4px; background: #d6d6d6; }
.after .scrollbar { margin-top: 0; }
.highlight {
  position: absolute;
  left: -14px;
  right: 3px;
  bottom: -3px;
  height: 89px;
  border: 6px solid #eb3323;
}
.after .highlight { height: 76px; }
.arrow { position: absolute; top: 542px; left: 854px; width: 88px; height: 474px; }
```
